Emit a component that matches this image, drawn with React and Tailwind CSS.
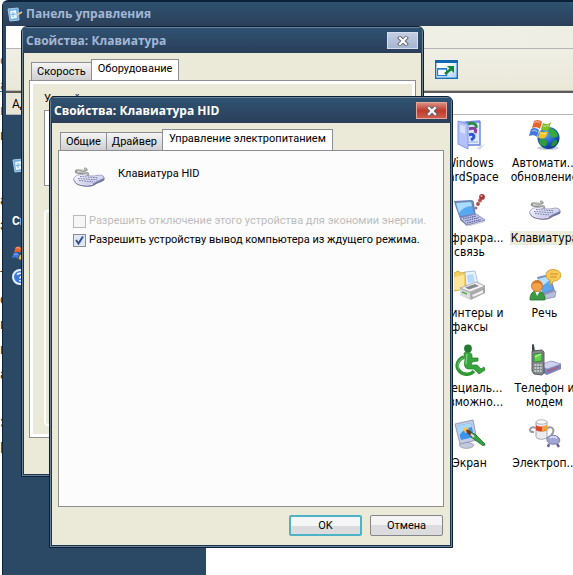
import React, { useState } from 'react';

const KeyboardIcon = () => (
  <svg viewBox="0 -2 32 32" className="w-8 h-8 shrink-0" aria-hidden="true">
    <defs>
      <linearGradient id="kb" x1="0" y1="0" x2="1" y2="1">
        <stop offset="0" stopColor="#ffffff" />
        <stop offset="1" stopColor="#b4b8e0" />
      </linearGradient>
    </defs>
    <path d="M15 12C16 9 11 10 6 10C1 10 2 6.500 7 7.500C12 8.500 16 7 12 5.500" fill="none" stroke="#8b8e8b" strokeWidth="2" strokeLinecap="round" />
    <path d="M15 11.500C15 9 11 9.500 6 9.500C2 9.500 4 6.800 7 7C12 8 15 6.500 12 5.200" fill="none" stroke="#d6d7d3" strokeWidth="0.800" />
    <path d="M0.500 17C2 13 6 11 11 12C17 13 20 14 25 12.500C30 11.500 33 15 31 17.500C27 20 24 20 21 22.500C16 25 2 24 0.500 17Z" fill="#6d6f9c" />
    <path d="M0.500 16C2 12.500 6 11 11 11.800C17 13 20 13.500 25 12.200C29 11.500 32 13.500 30.500 15.500C26 18 23 18.500 20 21C15 23.500 1 22 0.500 16Z" fill="url(#kb)" stroke="#8c8eb8" strokeWidth="0.700" />
    <g stroke="#7479ae" strokeWidth="1" strokeDasharray="1.700 0.900" fill="none">
      <path d="M7 13.500L25 14.800" />
      <path d="M5 15.500L24 16.800" />
      <path d="M6 17.500L20 18.800" />
    </g>
    <path d="M3 19C6 22 15 23 20 21" fill="none" stroke="#fff" strokeWidth="0.800" />
  </svg>
);

const CardSpaceIcon = () => (
  <svg viewBox="0 0 32 32" className="w-8 h-8" aria-hidden="true">
    <path d="M22 29L31 25L26 31Z" fill="#dcdce4" />
    <path d="M4 3L26 1V25L12 27L4 23Z" fill="#93a4f0" />
    <path d="M13 3H26V26H12Z" fill="#dfe9ff" stroke="#6a82e0" strokeWidth="1.400" />
    <path d="M4 2L14 5V30L4 25Z" fill="#b3c2fa" stroke="#8296ea" />
    <path d="M6 6L11 7V15L6 13Z" fill="#d6e2ff" />
    <path d="M14 5C19 3 23 5 22 9" fill="none" stroke="#2f8c48" strokeWidth="3" />
    <path d="M15 10C20 8 23 10 21 14" fill="none" stroke="#8c3f9c" strokeWidth="3" />
    <path d="M15 16C20 14 22 18 17 21" fill="none" stroke="#3157d4" strokeWidth="3" />
    <path d="M15 23H24" stroke="#aebff2" strokeWidth="1.500" />
  </svg>
);

const Flag = () => (
  <g>
    <path d="M5 2C8 0 11 1 13 3L11 10C9 8 6 8 3 9Z" fill="#e8622a" />
    <path d="M14 4C17 6 20 5 22 3L20 10C18 12 14 12 12 10Z" fill="#7fbf2a" />
    <path d="M2 10C5 8 8 9 10 11L8 18C6 16 3 16 0 17Z" fill="#3f78dc" />
    <path d="M11 12C14 14 17 13 19 12L17 18C15 20 11 20 9 18Z" fill="#f6c322" />
    <path d="M5 4C7 2 9 2 11 4M3 12C5 11 7 11 8 13M14 7C16 8 18 7 20 6M12 14C14 15 16 15 17 14" fill="none" stroke="#fff" strokeOpacity="0.45" strokeWidth="1.300" />
  </g>
);

const UpdateIcon = () => (
  <svg viewBox="0 0 32 32" className="w-8 h-8" aria-hidden="true">
    <defs>
      <radialGradient id="globe" cx="0.4" cy="0.3" r="0.8">
        <stop offset="0" stopColor="#5fa9f4" />
        <stop offset="0.600" stopColor="#1a56bd" />
        <stop offset="1" stopColor="#0b2b77" />
      </radialGradient>
    </defs>
    <ellipse cx="19" cy="29" rx="11" ry="2" fill="#ccd0da" />
    <circle cx="19.500" cy="19" r="11" fill="url(#globe)" />
    <path d="M20 9C26 10 29 14 29 18C26 17 25 20 22 18C21 14 18 14 20 9Z" fill="#38a83a" />
    <path d="M11 20C15 19 19 21 18 24C18 27 16 28 14 27C11 26 9 23 11 20Z" fill="#2f9d3d" />
    <path d="M24 22C27 20 29 21 28 24C26 27 24 28 22 27Z" fill="#2a8f38" />
    <Flag />
  </svg>
);

const InfraredIcon = () => (
  <svg viewBox="0 0 32 32" className="w-8 h-8" aria-hidden="true">
    <path d="M10 31L31 26L31 28L16 32Z" fill="#d0d0d8" />
    <path d="M0 7L17 6C19 6 20 7 20 9L22 22L6 25L1 11Z" fill="#6f85b4" />
    <path d="M2 9L17 8L20 20L6 22Z" fill="#56a9f0" />
    <path d="M2 9L17 8L18 12C12 12 8 15 5 19Z" fill="#a9dcff" />
    <path d="M6 24L22 20L31 26L13 31Z" fill="#c9cdea" stroke="#7a80b8" strokeWidth="0.900" />
    <path d="M9 25L22 22M11 27L25 23.500M13 29L27 25.500" stroke="#565e9e" strokeWidth="1.200" strokeDasharray="1.600 0.700" />
    <path d="M6 24V26L13 32V30Z" fill="#8186b4" />
    <circle cx="22" cy="14" r="1.500" fill="#b76a6a" />
    <circle cx="24" cy="10" r="1.900" fill="#b04a4a" />
    <circle cx="26" cy="6.500" r="2" fill="#bb5454" />
    <circle cx="28" cy="2.900" r="2.900" fill="#a33a3a" />
    <circle cx="27.400" cy="2" r="1" fill="#e0a2a2" />
  </svg>
);

const PrinterIcon = () => (
  <svg viewBox="0 0 32 32" className="w-8 h-8" aria-hidden="true">
    <path d="M0 4L4 2L7 4L12 3V20L0 22Z" fill="#f3cf62" stroke="#caa03a" strokeWidth="0.800" />
    <path d="M0 8L10 6V20L0 21Z" fill="#fbe699" />
    <path d="M11 3L21 2L24 15L12 17Z" fill="#e9f4ff" stroke="#9bb4d8" strokeWidth="0.800" />
    <path d="M13 6L19 5L21 13L14 14Z" fill="#b9d8fb" />
    <path d="M6 19L23 13L31 17V24L17 31L6 26Z" fill="#b9b9bd" />
    <path d="M6 19L22 13L31 17L16 23Z" fill="#f2f2f2" stroke="#9a9a9e" strokeWidth="0.700" />
    <path d="M11 18.500L21 15L25 17L15 20.500Z" fill="#85888f" />
    <path d="M6 20L16 24V30L6 26Z" fill="#dcdcde" />
    <path d="M16 24L31 18V24L17 30Z" fill="#a6a6ab" />
    <path d="M18 26L29 21V24L19 28Z" fill="#efefef" />
    <path d="M8 23L13 25" stroke="#58a858" strokeWidth="1.500" />
  </svg>
);

const SpeechIcon = () => (
  <svg viewBox="0 0 32 32" className="w-8 h-8" aria-hidden="true">
    <path d="M8 8L21 5L26 22L14 26Z" fill="#7f8fb8" />
    <path d="M9 10L20 7L24 20L14 24Z" fill="#5ba6ef" />
    <path d="M9 10L20 7L21 11L12 18Z" fill="#b7e0ff" />
    <path d="M14 26L27 22L26 28L17 30Z" fill="#b8bfdc" stroke="#8088ae" strokeWidth="0.700" />
    <path d="M19 2C23 -1 32 1 32 6C32 10 28 12 25 12L21 16L21 11C16 10 16 4 19 2Z" fill="#f8c957" stroke="#d99a2b" strokeWidth="0.900" />
    <path d="M21 5H29M21 8H28" stroke="#d08d26" strokeWidth="1" />
    <path d="M1 31C1 24 4 22 8 22C13 22 16 25 16 31Z" fill="#3b9b45" stroke="#246e2f" strokeWidth="0.800" />
    <path d="M6 22L8 27L11 22Z" fill="#eef7ee" />
    <circle cx="8" cy="17" r="5.500" fill="#f2a04a" stroke="#bd6a22" strokeWidth="0.800" />
    <path d="M3 16C3 10 14 10 13 16C10 13 6 13 3 16Z" fill="#d4771f" />
  </svg>
);

const AccessIcon = () => (
  <svg viewBox="0 0 32 32" className="w-8 h-8" aria-hidden="true">
    <circle cx="14" cy="4.500" r="3.900" fill="#227b2f" />
    <path d="M10 9C13 7 17 8 18 11L18 14L24 14V17L18 18L17 21H23L27 25L30 23L31 26L25 30L20 25H14C10 24 10 20 11 16Z" fill="#36a53c" stroke="#1f7a2a" strokeWidth="0.700" />
    <path d="M10 13C4 15 2 21 4 25C7 31 16 32 20 27" fill="none" stroke="#2f9936" strokeWidth="3.600" />
    <path d="M9 14C4 17 3 21 5 25" fill="none" stroke="#7bcf77" strokeWidth="1" />
    <path d="M13 10L12 20" stroke="#86d680" strokeWidth="1.200" />
  </svg>
);

const PhoneIcon = () => (
  <svg viewBox="0 0 32 32" className="w-8 h-8" aria-hidden="true">
    <path d="M10 21L23 17L32 20V25L18 31L10 27Z" fill="#7d82b8" />
    <path d="M10 21L22 17L32 20L18 25Z" fill="#cfd3f0" stroke="#9094c6" strokeWidth="0.700" />
    <path d="M19 27L30 23" stroke="#c44b5a" strokeWidth="1.400" strokeDasharray="2 1" />
    <path d="M3 1C3 0 5 0 5 1L6 8H3Z" fill="#3f4447" />
    <path d="M3 7L13 6L15 8V29L13 31L5 30L3 27Z" fill="#84898c" stroke="#4c5154" strokeWidth="0.900" />
    <path d="M5 10L13 9V17L5 18Z" fill="#62d34f" stroke="#2f6b2a" strokeWidth="0.700" />
    <path d="M6 13L12 10" stroke="#b9f5a6" strokeWidth="1.300" />
    <path d="M5.500 21H13M5.500 24H13M5.500 27H12.500" stroke="#dfe2e4" strokeWidth="1.500" strokeDasharray="1.800 0.900" />
  </svg>
);

const DisplayIcon = () => (
  <svg viewBox="0 0 32 32" className="w-8 h-8" aria-hidden="true">
    <path d="M5 26C8 23 15 22 20 26C19 30 7 31 5 26Z" fill="#c3c8dc" stroke="#8a90ae" strokeWidth="0.700" />
    <path d="M1 5L19 1L23 21L6 25Z" fill="#c4cbe2" stroke="#838cb0" strokeWidth="0.800" />
    <path d="M3 7L17 4L20 18L7 21Z" fill="#3b93ec" />
    <path d="M3 7L17 4L18 8C12 9 8 12 5 17Z" fill="#a6d9ff" />
    <path d="M9 9L14 8L15 13L11 14Z" fill="#f6c356" />
    <path d="M12 11C15 10 19 13 19 17C15 17 13 15 12 11Z" fill="#6c4020" />
    <path d="M18 14L21 15L31 25C31 27 29 27 28 26L17 18Z" fill="#37a142" stroke="#1e6b2a" strokeWidth="0.800" />
    <path d="M17 15L20 18" stroke="#ddd" strokeWidth="2" />
  </svg>
);

const PowerIcon = () => (
  <svg viewBox="0 0 32 32" className="w-8 h-8" aria-hidden="true">
    <path d="M7 9C0 6 -1 14 5 13M18 9C25 6 26 13 22 16" fill="none" stroke="#9a9aa3" strokeWidth="2" />
    <path d="M7 3V18C8 21 17 21 18 18V3Z" fill="#ececf0" stroke="#9a9aa4" strokeWidth="0.900" />
    <path d="M7 6C9 8 16 8 18 6V11C16 13 9 13 7 11Z" fill="#d9442c" />
    <path d="M13 7.500L18 6V11L13 12.500Z" fill="#f1a43a" />
    <ellipse cx="12.500" cy="3" rx="5.500" ry="2.200" fill="#f8f8fa" stroke="#a0a0aa" strokeWidth="0.800" />
    <path d="M18 19C21 15 28 16 30 19C32 22 30 25 26 25C21 26 17 23 18 19Z" fill="#a3a6d2" stroke="#6c70a8" strokeWidth="0.900" />
    <path d="M20 25L19 28M28 25L30 28" stroke="#5f6398" strokeWidth="2.400" />
    <path d="M21 19C23 17 26 18 28 19" fill="none" stroke="#e6e8fa" strokeWidth="1.500" />
  </svg>
);

const PanelIcon = () => (
  <svg viewBox="0 0 16 16" className="w-4 h-4 shrink-0" aria-hidden="true">
    <path d="M1 3L11 2L12 14L3 15Z" fill="#6fabe0" stroke="#a9cdee" />
    <path d="M3 5L9 4L10 12L4 13Z" fill="#e8f5ff" />
    <path d="M6 6V11M4 8.500L9 8" stroke="#6fb0e4" strokeWidth="1" />
    <path d="M10 9L15 6" stroke="#ecc98a" strokeWidth="1.500" />
  </svg>
);

const FoldersIcon = () => (
  <svg viewBox="0 0 23 19" className="w-[23px] h-[19px]" aria-hidden="true">
    <defs>
      <linearGradient id="fold" x1="0" y1="0" x2="1" y2="1">
        <stop offset="0.300" stopColor="#fff" />
        <stop offset="1" stopColor="#a9d0fa" />
      </linearGradient>
    </defs>
    <rect x="0.700" y="0.700" width="21.600" height="17.600" fill="url(#fold)" stroke="#1470b8" strokeWidth="1.400" />
    <rect x="0" y="0" width="23" height="3" fill="#1267b0" />
    <rect x="2.600" y="8.600" width="9" height="7" fill="#fff" stroke="#2b7fd0" strokeWidth="1.200" />
    <path d="M3 9H12" stroke="#2b7fd0" strokeWidth="1.400" />
    <path d="M10 14L16 9" stroke="#12862a" strokeWidth="2.600" />
    <path d="M12 6H19V13Z" fill="#12862a" />
  </svg>
);

const CloseIcon = () => (
  <svg viewBox="0 0 12 10" className="w-3 h-[10px]" aria-hidden="true">
    <path d="M3 2L9 8M9 2L3 8" stroke="#5c5c68" strokeWidth="4" strokeLinecap="square" />
    <path d="M3 2L9 8M9 2L3 8" stroke="#fff" strokeWidth="2.300" strokeLinecap="square" />
  </svg>
);

const items = [
  { lines: ['Windows', 'CardSpace'], Icon: CardSpaceIcon },
  { lines: ['Автомати...', 'обновление'], Icon: UpdateIcon },
  { lines: ['Инфракра...', 'связь'], Icon: InfraredIcon },
  { lines: ['Клавиатура'], Icon: KeyboardIcon, selected: true },
  { lines: ['Принтеры и', 'факсы'], Icon: PrinterIcon },
  { lines: ['Речь'], Icon: SpeechIcon },
  { lines: ['Специаль...', 'возможно...'], Icon: AccessIcon },
  { lines: ['Телефон и', 'модем'], Icon: PhoneIcon },
  { lines: ['Экран'], Icon: DisplayIcon },
  { lines: ['Электроп...'], Icon: PowerIcon },
];

const TitleBar = ({ title, active }) => (
  <div className="flex h-[25px] items-center justify-between bg-linear-to-b from-[#2f5272] to-[#2b3f59] pl-[3px] pr-1">
    <h2 className={`font-['Open_Sans',sans-serif] text-xs font-bold whitespace-nowrap ${active ? 'text-white' : 'text-[#a3b8d6]'}`}>
      {title}
    </h2>
    <button
      type="button"
      aria-label="Закрыть"
      className={`flex h-[17px] w-[31px] items-center justify-center border ${
        active
          ? 'border-[#e7a79d] bg-linear-to-b from-[#dc8a80] via-[#bd3a2c] to-[#cf5c4c]'
          : 'border-[#d5deed] bg-linear-to-b from-[#c3cee2] to-[#a5b4d0]'
      }`}
    >
      <CloseIcon />
    </button>
  </div>
);

const Tab = ({ active, onClick, children }) => (
  <button
    type="button"
    role="tab"
    aria-selected={active}
    onClick={onClick}
    className={`border border-b-0 border-[#8c8e94] whitespace-nowrap ${
      active
        ? '-mb-px h-[22px] bg-white px-[6px] pb-1'
        : 'h-[18px] border-r-0 bg-linear-to-b from-[#f4f4f4] to-[#cfcfd1] px-[5px]'
    }`}
  >
    {children}
  </button>
);

const App = () => {
  const [wake, setWake] = useState(true);
  const [tab, setTab] = useState('Управление электропитанием');

  return (
    <div className="relative flex min-h-screen overflow-hidden bg-white font-['Roboto',sans-serif] text-[11px] leading-[14px] text-black">
      {/* Page behind the windows */}
      <div className="w-[2px] shrink-0 overflow-hidden bg-white pt-12 text-sm leading-[25px] text-[#333]">
        <div className="text-[#0b7fae]">с</div>
        <div className="text-[#0b7fae] underline">а</div>
        <div className="text-[#0b7fae]">к</div>
        <div>н</div>
        <div className="pt-10">а</div>
        <div>з</div>
        <div className="pt-6">т</div>
        <div>о</div>
        <div>и</div>
        <div>н</div>
        <div>а</div>
        <div className="pt-6">Э</div>
        <div>Е</div>
      </div>

      {/* Control panel */}
      <div className="flex min-w-0 flex-1 flex-col rounded-tl-md border-t-2 border-l border-[#0c2038] bg-[#2b4865]">
        <div className="flex h-6 shrink-0 items-center gap-[3px] bg-linear-to-b from-[#2f5272] to-[#2b3f59] pl-1">
          <PanelIcon />
          <h1 className="font-['Open_Sans',sans-serif] text-xs font-bold text-[#a3b8d6]">Панель управления</h1>
        </div>
        <div className="flex flex-1 flex-col pl-[3px]">
          <div className="h-[23px] border-b border-[#b4b4b4] bg-linear-to-r from-white via-[#f1f0e8] to-[#efeee4]" />
          <div className="flex h-[42px] items-center border-b border-[#b9b8ab] bg-linear-to-b from-[#f0efe6] to-[#e9e8d8] pl-[429px]">
            <button type="button" aria-label="Папки">
              <FoldersIcon />
            </button>
          </div>
          <div className="flex h-6 items-center border-t-2 border-b border-[#5b5c5a] border-b-[#b4b4b4] bg-linear-to-r from-[#e6e5d8] from-5% to-white to-10% pl-[6px] text-xs">
            Адрес
          </div>
          <div className="flex flex-1">
            <div className="flex w-[200px] shrink-0 flex-col gap-4 bg-[#2b4865] pt-[42px] pl-[6px] text-xs font-bold text-white">
              <PanelIcon />
              <div className="pt-6">См. также</div>
              <div className="flex flex-col gap-2">
                <svg viewBox="0 0 22 20" className="h-4 w-4" aria-hidden="true"><Flag /></svg>
                <svg viewBox="0 0 16 16" className="h-4 w-4" aria-hidden="true">
                  <circle cx="8" cy="8" r="7" fill="#3f78dc" stroke="#e5effc" strokeWidth="2" />
                  <path d="M5.500 6C6 3 11 4 10 7C9 8 8 8 8 9.500M8 11V12.500" fill="none" stroke="#fff" strokeWidth="1.600" />
                </svg>
              </div>
            </div>
            <ul className="grid flex-1 grid-cols-[75px_75px] content-start overflow-hidden bg-white pt-1 pl-[226px] font-['DejaVu_Sans_Condensed',sans-serif] text-xs leading-[14px]">
              {items.map(({ lines, Icon, selected }) => (
                <li key={lines[0]} className="flex h-[75px] flex-col items-center gap-[5px] text-center">
                  <Icon />
                  <div className={selected ? 'bg-[#ecebdc] px-px' : ''}>
                    {lines.map((line) => (
                      <div key={line} className="whitespace-nowrap">{line}</div>
                    ))}
                  </div>
                </li>
              ))}
            </ul>
          </div>
        </div>
      </div>

      {/* Keyboard properties */}
      <section className="absolute top-[26px] left-[21px] flex h-[451px] w-[403px] flex-col rounded-t-md border border-[#0c2038] bg-[#6d8498] p-px">
        <TitleBar title="Свойства: Клавиатура" />
        <div className="flex flex-1 flex-col border border-t-0 border-[#1b3550] bg-[#ebead9] px-[5px] pb-9">
          <div className="flex items-end px-0.5 pt-[6px]" role="tablist">
            <Tab>Скорость</Tab>
            <Tab active>Оборудование</Tab>
          </div>
          <div className="flex-1 border border-[#8c8e94] bg-white p-[3px]">
            <div className="h-full bg-[#ebead9] px-[11px] pt-2">
              <div className="pb-1">Устройства:</div>
              <div className="h-[76px] border border-[#8c8e94] bg-white" />
              <div className="mt-6 h-[216px] rounded border-2 border-white" />
            </div>
          </div>
        </div>
      </section>

      {/* HID keyboard properties */}
      <section className="absolute top-24 left-[49px] flex h-[452px] w-[404px] flex-col rounded-t-md border border-[#0c2038] bg-[#6d8498] p-px">
        <TitleBar title="Свойства: Клавиатура HID" active />
        <div className="flex flex-1 flex-col border border-t-0 border-[#1b3550] bg-[#ebead9] px-[6px]">
          <div className="flex items-end px-0.5 pt-[6px]" role="tablist">
            {['Общие', 'Драйвер', 'Управление электропитанием'].map((name) => (
              <Tab key={name} active={tab === name} onClick={() => setTab(name)}>{name}</Tab>
            ))}
          </div>
          <div className="flex-1 border border-[#8c8e94] bg-[#fcfcfc] px-[14px] pt-[10px]">
            <div className="flex items-start gap-[13px]">
              <KeyboardIcon />
              <span className="pt-[6px]">Клавиатура HID</span>
            </div>
            <label className="mt-[21px] flex items-center gap-[3px] whitespace-nowrap text-[#bcbcbc]">
              <input type="checkbox" disabled className="h-[13px] w-[13px] appearance-none border border-[#b9b9b9] bg-[#f6f6f6]" />
              Разрешить отключение этого устройства для экономии энергии.
            </label>
            <label className="mt-[5px] flex items-center gap-[3px] whitespace-nowrap">
              <span className="relative flex">
                <input
                  type="checkbox"
                  checked={wake}
                  onChange={(e) => setWake(e.target.checked)}
                  className="h-[13px] w-[13px] appearance-none border border-[#8c8e94] bg-[#dfe8f2]"
                />
                {wake && (
                  <svg viewBox="0 0 13 13" className="pointer-events-none absolute inset-0" aria-hidden="true">
                    <path d="M3 6L5.500 9.500L10 2.500" fill="none" stroke="#354f8c" strokeWidth="2" />
                  </svg>
                )}
              </span>
              Разрешить устройству вывод компьютера из ждущего режима.
            </label>
          </div>
          <div className="flex justify-end gap-2 pt-2 pr-px pb-[9px]">
            <button type="button" className="h-[21px] w-[73px] rounded-xs border-2 border-[#4fb3c8] bg-linear-to-b from-[#f6f6f6] from-50% to-[#dcdcde] to-50%">
              OK
            </button>
            <button type="button" className="h-[21px] w-[73px] rounded-xs border border-[#85858a] bg-linear-to-b from-[#f4f4f4] from-50% to-[#dcdcde] to-50%">
              Отмена
            </button>
          </div>
        </div>
      </section>
    </div>
  );
};

export default App;
